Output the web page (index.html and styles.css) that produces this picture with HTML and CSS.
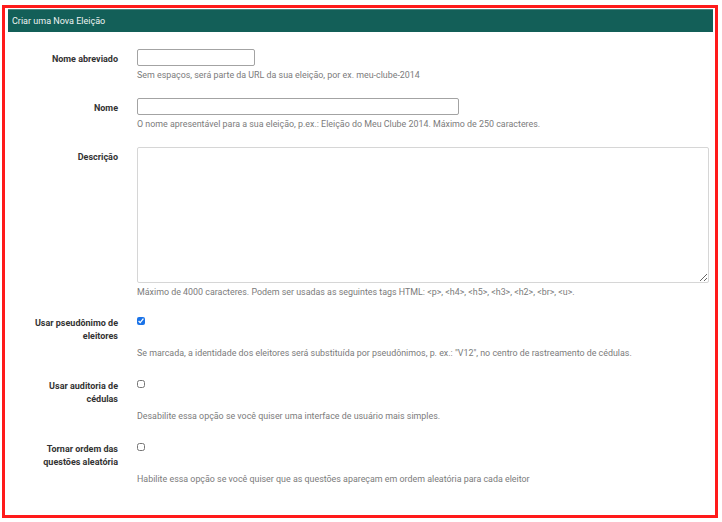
FILE: index.html
```html
<!DOCTYPE html>
<html lang="pt-BR">
<head>
<meta charset="utf-8">
<title>Criar uma Nova Eleição</title>
<link rel="stylesheet" href="styles.css">
</head>
<body>
<div class="frame">
  <div class="panel">
    <div class="panel-heading">Criar uma Nova Eleição</div>
    <form class="panel-body">
      <div class="row">
        <label class="label" for="short">Nome abreviado</label>
        <div class="control">
          <input class="input input-short" id="short" type="text">
          <div class="help">Sem espaços, será parte da URL da sua eleição, por ex. meu-clube-2014</div>
        </div>
      </div>
      <div class="row">
        <label class="label" for="name">Nome</label>
        <div class="control">
          <input class="input input-name" id="name" type="text">
          <div class="help">O nome apresentável para a sua eleição, p.ex.: Eleição do Meu Clube 2014. Máximo de 250 caracteres.</div>
        </div>
      </div>
      <div class="row">
        <label class="label" for="desc">Descrição</label>
        <div class="control">
          <textarea class="textarea" id="desc"></textarea>
          <div class="help">Máximo de 4000 caracteres. Podem ser usadas as seguintes tags HTML: &lt;p&gt;, &lt;h4&gt;, &lt;h5&gt;, &lt;h3&gt;, &lt;h2&gt;, &lt;br&gt;, &lt;u&gt;.</div>
        </div>
      </div>
      <div class="row check-row">
        <label class="label" for="pseudo">Usar pseudônimo de eleitores</label>
        <div class="control">
          <div class="check"><input class="checkbox" id="pseudo" type="checkbox" checked></div>
          <div class="help">Se marcada, a identidade dos eleitores será substituída por pseudônimos, p. ex.: "V12", no centro de rastreamento de cédulas.</div>
        </div>
      </div>
      <div class="row check-row">
        <label class="label" for="audit">Usar auditoria de cédulas</label>
        <div class="control">
          <div class="check"><input class="checkbox" id="audit" type="checkbox"></div>
          <div class="help">Desabilite essa opção se você quiser uma interface de usuário mais simples.</div>
        </div>
      </div>
      <div class="row check-row">
        <label class="label" for="random">Tornar ordem das questões aleatória</label>
        <div class="control">
          <div class="check"><input class="checkbox" id="random" type="checkbox"></div>
          <div class="help">Habilite essa opção se você quiser que as questões apareçam em ordem aleatória para cada eleitor</div>
        </div>
      </div>
    </form>
  </div>
</div>
</body>
</html>
```

FILE: styles.css
```css
* {
  box-sizing: border-box;
}

html, body {
  margin: 0;
  padding: 0;
  height: 100%;
  background: #ffffff;
  font-family: Roboto, "Liberation Sans", sans-serif;
}

.frame {
  margin: 5px 4px 4px 2px;
  height: calc(100% - 9px);
  border: 3px solid #ff1a1a;
  padding: 1px 2px 0 3px;
}

.panel {
  background: #ffffff;
}

.panel-heading {
  height: 23px;
  background: #135f58;
  color: #eef3f2;
  font-size: 9px;
  line-height: 22px;
  padding-left: 4px;
  border-top: 1px solid #4a857f;
}

.panel-body {
  padding: 17px 4px 0 0;
}

.row {
  display: grid;
  grid-template-columns: 110px 1fr;
  column-gap: 19px;
  margin-bottom: 17px;
}

.row.check-row {
  margin-bottom: 19px;
}

.label {
  text-align: right;
  font-weight: 700;
  font-size: 9px;
  line-height: 13px;
  color: #333333;
  padding-top: 4px;
  padding-left: 18px;
}

.check-row .label {
  padding-top: 2px;
}

.control {
  display: flex;
  flex-direction: column;
  align-items: flex-start;
}

.input {
  display: block;
  height: 17px;
  margin: 0;
  padding: 0 3px;
  border: 1px solid #a3a3a3;
  border-radius: 2px;
  font: inherit;
  font-size: 9px;
  background: #ffffff;
}

.input-short {
  width: 118px;
}

.input-name {
  width: 322px;
}

.textarea {
  display: block;
  width: 100%;
  height: 136px;
  margin: 0;
  border: 1px solid #d6d6d6;
  border-radius: 2px;
  background: #ffffff;
  font: inherit;
  font-size: 9px;
}

.help {
  margin-top: 3px;
  font-size: 8.9px;
  line-height: 12px;
  color: #7b7b7b;
  white-space: nowrap;
}

.check {
  height: 29px;
  padding-top: 2px;
}

.checkbox {
  display: block;
  width: 8px;
  height: 8px;
  margin: 0;
  accent-color: #1a73e8;
}
```
